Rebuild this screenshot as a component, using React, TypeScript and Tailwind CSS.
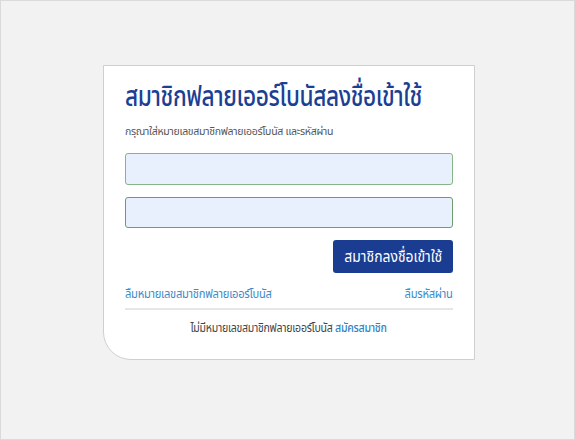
import React from 'react';

const thai = { fontFamily: '"Noto Sans Thai", "Noto Sans", "DejaVu Sans", sans-serif' };

export default function App() {
  return (
    <div
      className="w-[575px] h-[440px] bg-[#f2f2f2] border border-[#dadada] pl-[102px] pt-[64px]"
      style={thai}
    >
      <div className="w-[372px] h-[295px] bg-white border border-[#cfcfcf] rounded-bl-[28px] px-[21px] pt-[14px]">
        <h1 className="text-[28px] leading-[36px] font-medium text-[#1c3f94] tracking-[-0.5px] whitespace-nowrap origin-left scale-x-[0.81]">
          สมาชิกฟลายเออร์โบนัสลงชื่อเข้าใช้
        </h1>
        <p className="mt-[8px] text-[11px] leading-[16px] text-[#555555] tracking-[-0.3px] whitespace-nowrap origin-left scale-x-[0.955]">
          กรุณาใส่หมายเลขสมาชิกฟลายเออร์โบนัส และรหัสผ่าน
        </p>

        {/* Inputs */}
        <div className="mt-[13px] flex flex-col gap-[12px]">
          <input
            type="text"
            className="block w-full h-[32px] bg-[#e8f0fe] border border-[#86b487] rounded-[3px] outline-none"
          />
          <input
            type="password"
            className="block w-full h-[31px] bg-[#e8f0fe] border border-[#6d9c6f] rounded-[3px] outline-none"
          />
        </div>

        <div className="mt-[12px] flex justify-end">
          <button className="w-[120px] h-[33px] bg-[#1b3d91] text-white text-[16px] rounded-[3px]">
            <span className="inline-block whitespace-nowrap scale-x-[0.87]">สมาชิกลงชื่อเข้าใช้</span>
          </button>
        </div>

        {/* Links */}
        <div className="mt-[13px] flex justify-between text-[12px] leading-[16px] text-[#3d8bc9] tracking-[-0.3px]">
          <a href="#" className="inline-block whitespace-nowrap origin-left scale-x-[0.93]">ลืมหมายเลขสมาชิกฟลายเออร์โบนัส</a>
          <a href="#" className="inline-block whitespace-nowrap origin-right scale-x-[0.93]">ลืมรหัสผ่าน</a>
        </div>
        <div className="mt-[6px] h-[2px] bg-[#e6e6e6]" />

        <p className="mt-[10px] text-center text-[12px] leading-[16px] text-[#444444] tracking-[-0.3px]">
          <span className="inline-block whitespace-nowrap scale-x-[0.88]">
            ไม่มีหมายเลขสมาชิกฟลายเออร์โบนัส{' '}
            <a href="#" className="text-[#2f83c4] font-medium">สมัครสมาชิก</a>
          </span>
        </p>
      </div>
    </div>
  );
}
